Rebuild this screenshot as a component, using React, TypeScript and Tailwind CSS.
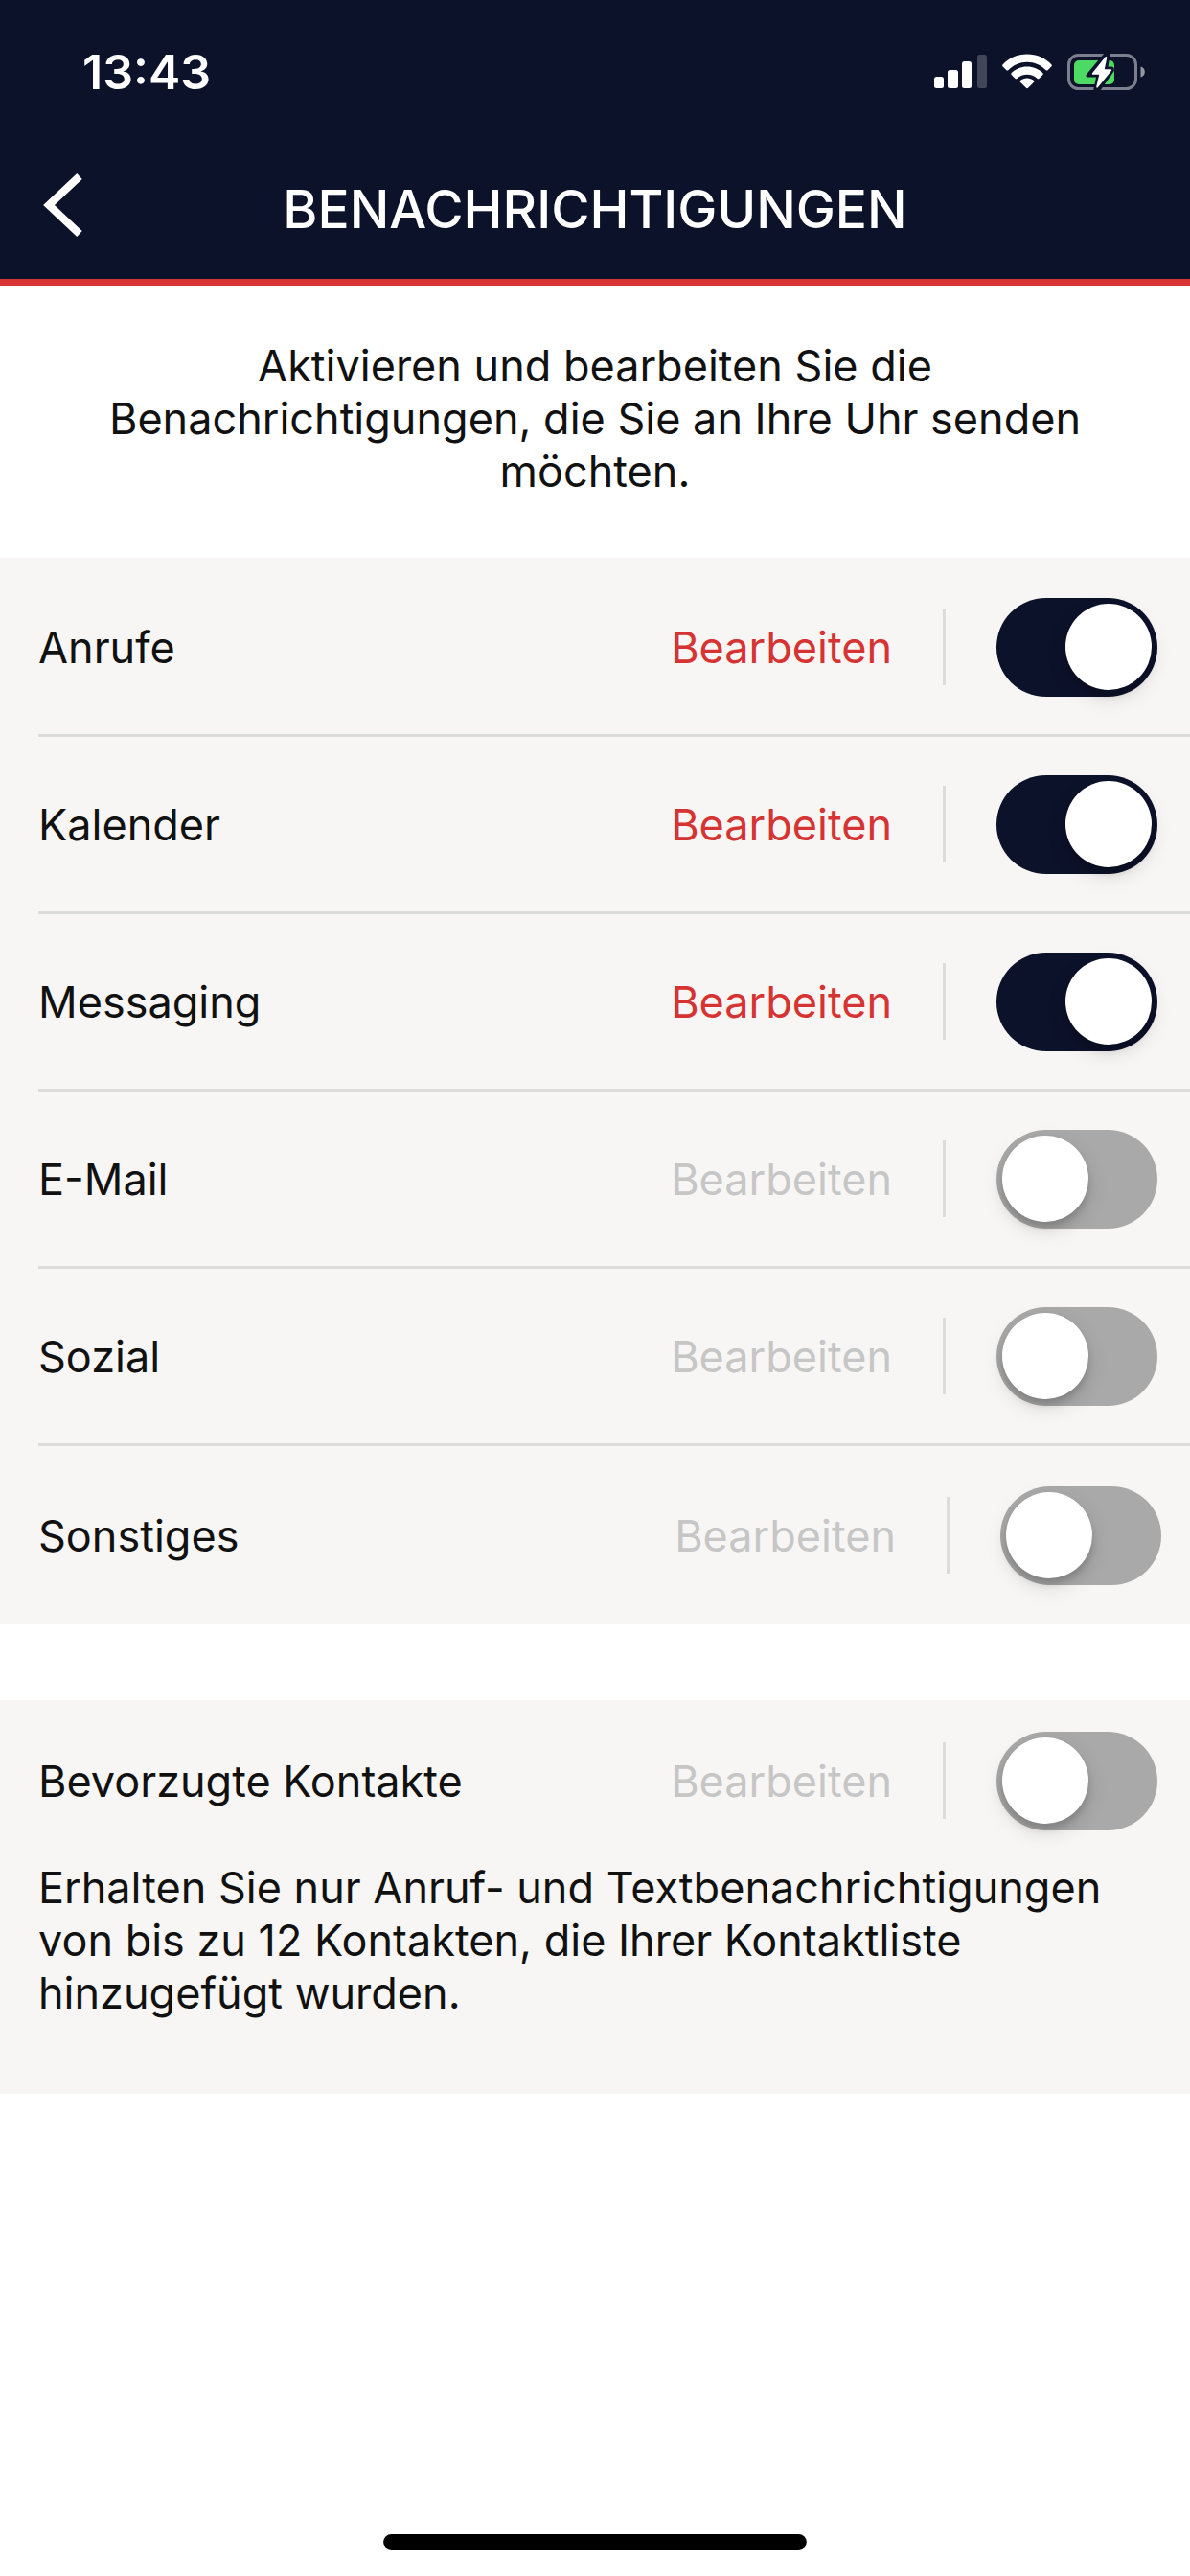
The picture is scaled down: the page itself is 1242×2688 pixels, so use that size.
import React, { useState } from "react";
import clsx from "clsx";

type Setting = {
  id: string;
  label: string;
  enabled: boolean;
};

const CHANNELS: Setting[] = [
  { id: "calls", label: "Anrufe", enabled: true },
  { id: "calendar", label: "Kalender", enabled: true },
  { id: "messaging", label: "Messaging", enabled: true },
  { id: "email", label: "E-Mail", enabled: false },
  { id: "social", label: "Sozial", enabled: false },
  { id: "other", label: "Sonstiges", enabled: false },
];

function StatusBar() {
  return (
    <div className="flex h-[150px] items-center justify-between pr-[46px] pl-[86px]">
      <span className="text-[50px] leading-none font-semibold">13:43</span>
      <div className="flex items-center gap-4">
        <svg width="55" height="38" viewBox="0 0 55 38" fill="currentColor" aria-hidden="true">
          <rect x="0" y="24" width="10" height="12" rx="2.5" />
          <rect x="14" y="17" width="11" height="19" rx="2.5" />
          <rect x="29" y="8" width="10" height="28" rx="2.5" />
          <rect x="45" y="1" width="10" height="35" rx="2.5" opacity="0.22" />
        </svg>
        <svg width="52" height="38" viewBox="0 0 52 38" fill="currentColor" aria-hidden="true">
          <path d="M26 0.5C36 0.5 45 4.500 51.300 11.200C52 12 52 12.900 51.300 13.600L47.800 17C47.100 17.700 46.200 17.700 45.500 17C40.300 11.700 33.500 8.700 26 8.700S11.700 11.700 6.500 17C5.800 17.700 4.900 17.700 4.200 17L0.700 13.600C0 12.900 0 12 0.700 11.200C7 4.500 16 0.500 26 0.500Z" />
          <path d="M26 13.500C32.300 13.500 38 16 42.200 20C42.900 20.700 42.900 21.500 42.200 22.200L38.600 25.700C37.900 26.400 37.100 26.400 36.400 25.700C33.600 23.200 30 21.700 26 21.700S18.400 23.200 15.600 25.700C14.900 26.400 14.100 26.400 13.400 25.700L9.800 22.200C9.100 21.500 9.100 20.700 9.800 20C14 16 19.700 13.500 26 13.500Z" />
          <path d="M26 25.500C28.700 25.500 31.200 26.400 33.100 28C33.700 28.500 33.700 29.200 33.100 29.800L27.200 35.600C26.500 36.300 25.500 36.300 24.800 35.600L18.900 29.800C18.300 29.200 18.300 28.500 18.900 28C20.800 26.400 23.300 25.500 26 25.500Z" />
        </svg>
        <svg width="82" height="40" viewBox="0 0 82 40" aria-hidden="true">
          <rect x="1.500" y="2.500" width="70" height="35" rx="10" fill="none" stroke="#7c7f8e" strokeWidth="3" />
          <path d="M76.500 14.500C79.300 15.200 80.800 17.300 80.800 20S79.300 24.800 76.500 25.500Z" fill="#9496a2" />
          <rect x="7" y="8" width="42" height="25" rx="5" fill="#4cd964" />
          <path
            d="M39 0L20 22.500C19 24 19.500 25.500 21 25.500H30L27 40H34L48.500 19.500C49.500 17.500 48.500 14.500 46.500 14.500H42.500L45 0Z"
            fill="#0d122b"
          />
          <path d="M39.500 4.500L26 21.200C25.500 22 25.800 22.800 26.600 22.800H33.200L30.200 35.800C30.200 36.600 31.200 37 31.800 36.200L46 18.800C46.500 18 46.200 17.200 45.400 17.200H38.800L41.300 5.200C41.300 4.200 40.200 3.700 39.500 4.500Z" fill="#ffffff" />
        </svg>
      </div>
    </div>
  );
}

function Toggle({ id, checked, onChange }: { id: string; checked: boolean; onChange: () => void }) {
  return (
    <input
      id={id}
      type="checkbox"
      role="switch"
      checked={checked}
      onChange={onChange}
      className="flex h-[103px] w-[168px] shrink-0 cursor-pointer appearance-none items-center rounded-full bg-[#a9a9a9] px-[6px] before:size-[90px] before:rounded-full before:bg-white before:shadow-[0_8px_20px_rgba(0,0,0,0.15),0_6px_6px_rgba(0,0,0,0.12)] before:content-[''] checked:justify-end checked:bg-[#0d122b]"
    />
  );
}

function SettingRow({
  setting,
  onToggle,
  className,
}: {
  setting: Setting;
  onToggle: (id: string) => void;
  className?: string;
}) {
  return (
    <div className={clsx("flex items-center", className)}>
      <label htmlFor={setting.id} className="flex-1">
        {setting.label}
      </label>
      <button
        type="button"
        disabled={!setting.enabled}
        className="text-[#d63333] disabled:text-[#c6c6c6]"
      >
        Bearbeiten
      </button>
      <div className="mx-[53px] h-20 w-[3px] bg-[#dcdcdc]" />
      <Toggle id={setting.id} checked={setting.enabled} onChange={() => onToggle(setting.id)} />
    </div>
  );
}

export default function App() {
  const [channels, setChannels] = useState(CHANNELS);
  const [favorites, setFavorites] = useState<Setting>({
    id: "favorites",
    label: "Bevorzugte Kontakte",
    enabled: false,
  });

  const toggleChannel = (id: string) => {
    setChannels((prev) => prev.map((c) => (c.id === id ? { ...c, enabled: !c.enabled } : c)));
  };

  return (
    <div className="flex min-h-screen flex-col bg-white font-['Inter',sans-serif] text-[45px] leading-[55px] text-[#111111]">
      <header className="border-b-[7px] border-[#d93434] bg-[#0d122b] text-white">
        <StatusBar />
        <nav className="grid h-[141px] grid-cols-[1fr_auto_1fr] items-center pb-1">
          <button type="button" aria-label="Zurück" className="justify-self-start pl-[44px]">
            <svg width="44" height="78" viewBox="0 0 44 78" fill="none" stroke="currentColor" strokeWidth="8">
              <path d="M39 4L7 34L39 64" />
            </svg>
          </button>
          <h1 className="text-[55px] leading-none font-medium">BENACHRICHTIGUNGEN</h1>
        </nav>
      </header>

      <main>
        <p className="px-20 pt-14 pb-[63px] text-center">
          Aktivieren und bearbeiten Sie die Benachrichtigungen, die Sie an Ihre Uhr senden möchten.
        </p>

        <section className="bg-[#f7f6f4] pt-[2px] pl-10">
          {channels.map((c, i) => (
            <SettingRow
              key={c.id}
              setting={c}
              onToggle={toggleChannel}
              className={
                i < channels.length - 1
                  ? "h-[185px] border-b-[3px] border-[#dcdcdc] pr-[34px]"
                  : "h-[186px] pr-[30px]"
              }
            />
          ))}
        </section>

        <section className="mt-[79px] bg-[#f7f6f4] pb-[78px] pl-10">
          <SettingRow
            setting={favorites}
            onToggle={() => setFavorites((f) => ({ ...f, enabled: !f.enabled }))}
            className="h-[168px] pr-[34px]"
          />
          <p className="pr-10">
            Erhalten Sie nur Anruf- und Textbenachrichtigungen von bis zu 12 Kontakten, die Ihrer
            Kontaktliste hinzugefügt wurden.
          </p>
        </section>
      </main>

      <div className="mx-auto mt-auto mb-[27px] h-[17px] w-[442px] rounded-full bg-black" />
    </div>
  );
}
